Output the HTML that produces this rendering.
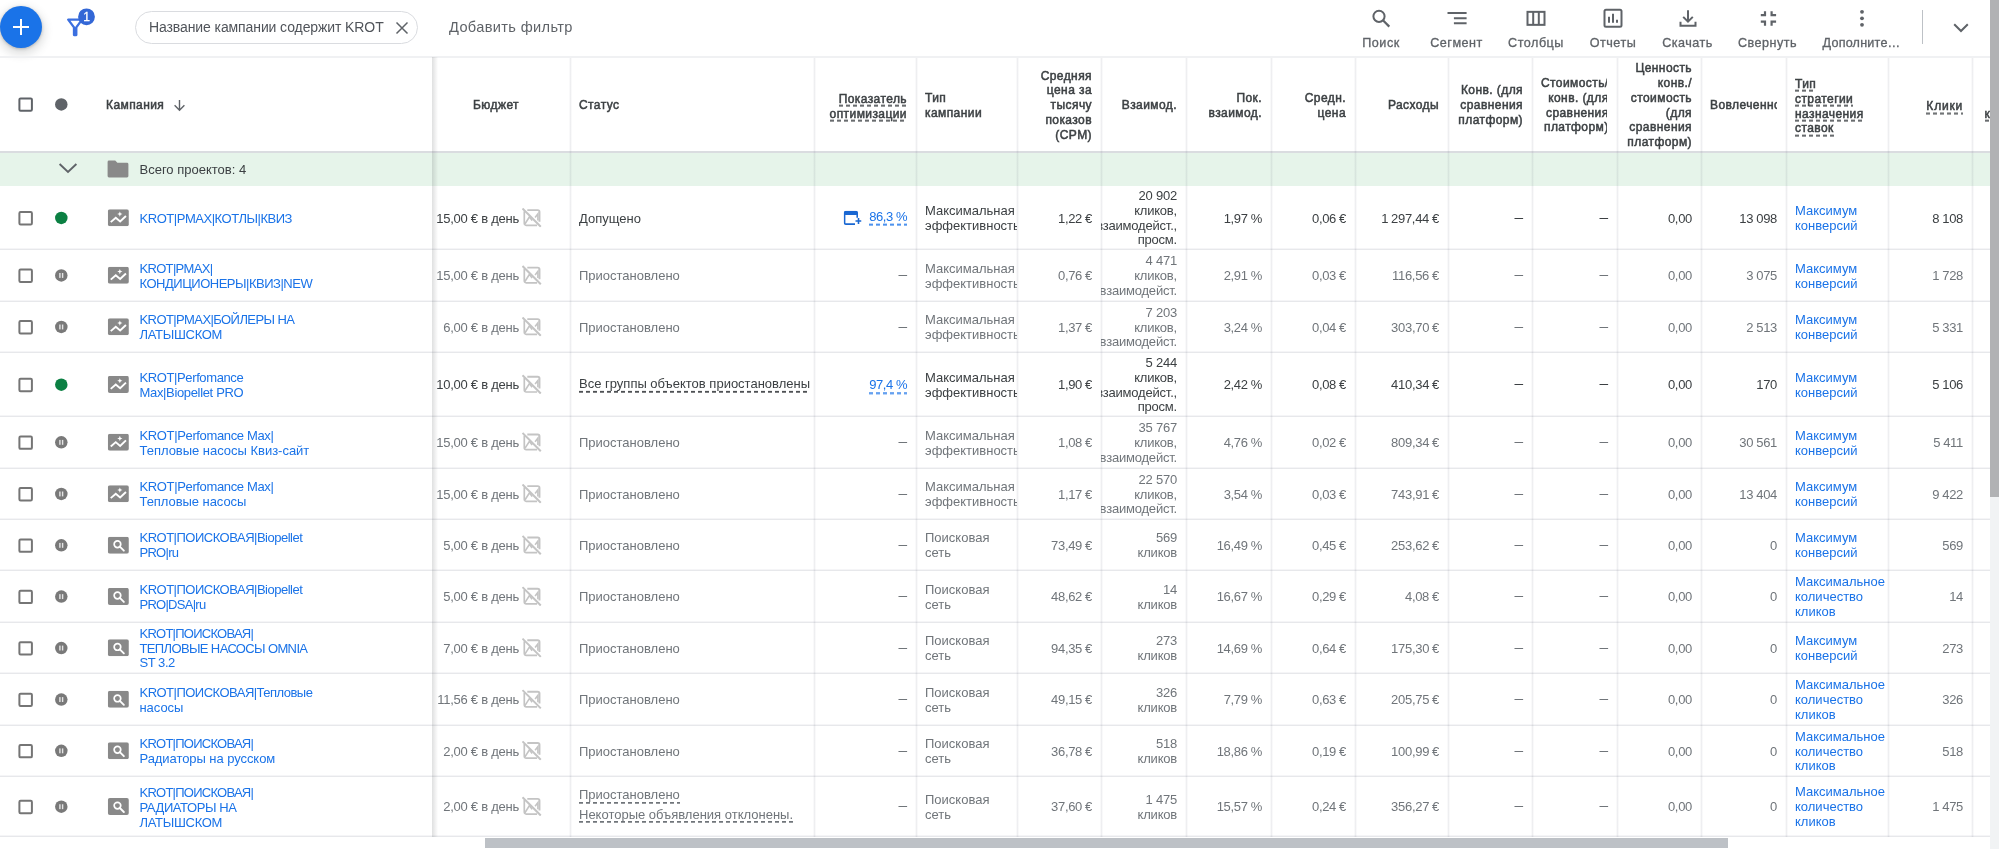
<!DOCTYPE html>
<html lang="ru"><head><meta charset="utf-8"><title>Кампании</title>
<style>
*{box-sizing:border-box}
html,body{margin:0;padding:0}
body{width:1999px;height:849px;overflow:hidden;background:#fff;font-family:"Liberation Sans",sans-serif;font-size:13px;color:#3c4043;position:relative}
.abs{position:absolute}
#toolbar{position:absolute;left:0;top:0;width:1990px;height:57px;background:#fff}
#tbline{position:absolute;left:0;top:56px;width:1990px;height:2px;background:#f0f1f3}
.fab{position:absolute;left:0;top:6px;width:42px;height:42px;border-radius:50%;background:#1a73e8;box-shadow:0 1px 3px rgba(60,64,67,.3),0 4px 8px 3px rgba(60,64,67,.15)}
.fab:before{content:"";position:absolute;left:13px;top:20px;width:16px;height:2px;background:#fff}
.fab:after{content:"";position:absolute;left:20px;top:13px;width:2px;height:16px;background:#fff}
.chip{position:absolute;left:135px;top:11px;width:283px;height:33px;border:1px solid #dadce0;border-radius:17px;background:#fff}
.chip span{position:absolute;left:13px;top:0;line-height:31px;font-size:14px;color:#50545a;white-space:nowrap;letter-spacing:-0.1px}
.addf{position:absolute;left:449px;top:0;line-height:54px;font-size:14.6px;letter-spacing:.35px;color:#5f6368;white-space:nowrap}
.tbtn{position:absolute;top:0;height:57px;width:90px;text-align:center}
.tbtn svg{position:absolute;left:33px;top:6px;transform:translateY(0.35px)}
.tbtn span{position:absolute;left:-20px;right:-20px;top:36.4px;line-height:15px;font-size:12.6px;letter-spacing:.5px;color:#5f6368;-webkit-text-stroke:0.3px #5f6368;white-space:nowrap;text-align:center}
.hline{position:absolute;left:0;width:1990px;height:1px;background:#e7e8eb;box-shadow:0 -1px 0 #f5f5f7}
.vline{position:absolute;top:58px;width:3px;height:779px;margin-left:-1px;background:linear-gradient(to right,rgba(60,64,90,.03) 0,rgba(60,64,90,.03) 1px,rgba(60,64,90,.085) 1px,rgba(60,64,90,.085) 2px,rgba(60,64,90,.03) 2px,rgba(60,64,90,.03) 3px)}
.cell{position:absolute;display:flex;align-items:center;padding:0 9px;overflow:hidden;line-height:14.8px;font-size:13px;white-space:nowrap}
.cell.r{justify-content:flex-end;text-align:right}
.cell.l{justify-content:flex-start;text-align:left}
.cell>span{flex:none;display:block}
.hd{font-weight:normal;-webkit-text-stroke:0.5px #3c4043;font-size:12px;color:#3c4043;line-height:14.8px;letter-spacing:0.42px}
.hd>span,.hd .clip>span{transform:translateY(0.7px)}
.hd.u>span{transform:translateY(1.7px)}
.hd.u1>span{transform:translateY(1.6px);letter-spacing:0.8px}
.clip{overflow:hidden;width:100%;height:100%;display:flex;align-items:center;justify-content:flex-start}
.clip>span{flex:none;display:block;text-align:right}
.p{color:#70757a}
.t{position:relative;top:1px;transform:translateY(0.4px)}
.r1 .t{transform:translateY(0.9px)}
.a{color:#3c4043}
.lk{color:#1a73e8}
.n{letter-spacing:-0.3px;word-spacing:-0.3px}
.ds{font-size:15.5px}
.ds .t{top:-0.8px}
.du{background-image:linear-gradient(to right,currentColor 0,currentColor 4px,transparent 4px,transparent 7px),linear-gradient(to right,color-mix(in srgb,currentColor 75%,transparent) 0,color-mix(in srgb,currentColor 75%,transparent) 4px,transparent 4px,transparent 7px);background-size:7px 1px,7px 1px;background-repeat:repeat-x,repeat-x;background-position:0 calc(100% - 1px),0 100%;padding-bottom:1.5px}
.cb{position:absolute;left:18.3px;width:15px;height:15px;border:2px solid #757575;border-radius:2px;background:#fff}
.dot{position:absolute;left:55.1px;width:12.4px;height:12.4px;border-radius:50%}
.dot.g{background:#0b8043}
.dot.pz{background:#757575}
.dot.pz:before,.dot.pz:after{content:"";position:absolute;top:3.8px;width:1.4px;height:4.8px;background:#fff}
.dot.pz:before{left:4.15px}
.dot.pz:after{left:6.85px}
.ic{position:absolute;left:108px;width:21px;height:17px}
.nm{position:absolute;left:139.5px;display:flex;align-items:center;color:#1a73e8;font-size:13px;line-height:14.8px;white-space:nowrap}
.bic{position:absolute}
</style></head><body>
<div id="app" style="position:absolute;left:0;top:0;width:1999px;height:849px;will-change:transform">
<svg width="0" height="0" style="position:absolute"><defs>
<symbol id="i-pmax" viewBox="0 0 21 17"><rect x="0" y="0" width="21" height="17" rx="2" fill="#898989"/><path d="M2.9 12.9 L7.9 8.5 L12.3 12.3 L18.1 6.7" fill="none" stroke="#fff" stroke-width="1.9" stroke-linejoin="miter"/><path d="M12 2.2 l0.75 1.85 1.85 0.75 -1.85 0.75 -0.75 1.85 -0.75 -1.85 -1.85 -0.75 1.85 -0.75z" fill="#fff"/></symbol>
<symbol id="i-srch" viewBox="0 0 21 17"><rect x="0" y="0" width="21" height="17" rx="2" fill="#898989"/><circle cx="9.6" cy="7.6" r="3.3" fill="none" stroke="#fff" stroke-width="1.7"/><path d="M12 10 L16 14" stroke="#fff" stroke-width="1.9" stroke-linecap="round"/></symbol>
<symbol id="i-bud" viewBox="0 0 20 20"><path d="M5.4 2.5 H15.8 a1.8 1.8 0 0 1 1.8 1.8 V14.2" fill="none" stroke="#c4c4c4" stroke-width="1.9"/><path d="M2.4 3.6 V15.9 a1.8 1.8 0 0 0 1.8 1.8 H15.2" fill="none" stroke="#c4c4c4" stroke-width="1.7"/><path d="M0.6 0.9 L18.9 19.2" stroke="#c4c4c4" stroke-width="2"/><path d="M3 16.4 L7.6 9.2 L10.2 13 M13.2 9.8 L16 6.2 L16 13" fill="none" stroke="#c4c4c4" stroke-width="1.6"/></symbol>
<symbol id="i-opt" viewBox="0 0 18 15"><path d="M11.5 13.4 H2.3 a1.2 1.2 0 0 1 -1.2 -1.2 V2 a1.2 1.2 0 0 1 1.2 -1.2 H12.5 a1.2 1.2 0 0 1 1.2 1.2 V7" fill="none" stroke="#1967d2" stroke-width="1.6"/><rect x="1" y="0.6" width="12.8" height="3.6" rx="1" fill="#1967d2"/><path d="M12 10.3 H18 M15 7.3 V13.3" stroke="#1967d2" stroke-width="1.6"/></symbol>
</defs></svg>
<div id="toolbar"><div class="fab"></div><svg class="abs" style="left:64px;top:6px" width="34" height="34" viewBox="0 0 34 34"><path d="M4.2 13.6 H18 L12.3 21.4 V29 H10 V21.4 Z" fill="none" stroke="#3b6fe0" stroke-width="2.3" stroke-linejoin="round"/><circle cx="22.5" cy="10.8" r="8.4" fill="#3367d6"/><text x="22.5" y="15" font-family="Liberation Sans, sans-serif" font-size="12" fill="#fff" stroke="#fff" stroke-width="0.3" text-anchor="middle">1</text></svg><div class="chip"><span>Название кампании содержит KROT</span><svg class="abs" style="left:259px;top:9px" width="14" height="14" viewBox="0 0 14 14"><path d="M1.5 1.5 L12.5 12.5 M12.5 1.5 L1.5 12.5" stroke="#5f6368" stroke-width="1.5" fill="none"/></svg></div><div class="addf">Добавить фильтр</div><div class="tbtn" style="left:1336px"><svg width="24" height="24" viewBox="0 0 24 24"><circle cx="10" cy="10" r="5.6" fill="none" stroke="#5f6368" stroke-width="2"/><path d="M14.2 14.2 L20.3 20.3" stroke="#5f6368" stroke-width="2.2"/></svg><span>Поиск</span></div><div class="tbtn" style="left:1411.5px"><svg width="24" height="24" viewBox="0 0 24 24"><path d="M2.5 6.6 H21.6 M8.9 11.9 H21.6 M8.9 17 H21.6" stroke="#5f6368" stroke-width="2" fill="none"/></svg><span>Сегмент</span></div><div class="tbtn" style="left:1491px"><svg width="24" height="24" viewBox="0 0 24 24"><rect x="3.5" y="5.5" width="17" height="13" fill="none" stroke="#5f6368" stroke-width="2"/><path d="M9.2 5.5 V18.5 M14.8 5.5 V18.5" stroke="#5f6368" stroke-width="2"/></svg><span>Столбцы</span></div><div class="tbtn" style="left:1568px"><svg width="24" height="24" viewBox="0 0 24 24"><rect x="3.5" y="3.5" width="17" height="17" rx="1.5" fill="none" stroke="#5f6368" stroke-width="2"/><path d="M8 10.5 V16.5 M12 7.5 V16.5 M16 13.5 V16.5" stroke="#5f6368" stroke-width="2"/></svg><span>Отчеты</span></div><div class="tbtn" style="left:1642.5px"><svg width="24" height="24" viewBox="0 0 24 24"><path d="M12 4 V15 M7.2 10.5 L12 15.3 L16.8 10.5" stroke="#5f6368" stroke-width="2" fill="none"/><path d="M4.5 15.5 V19.5 H19.5 V15.5" stroke="#5f6368" stroke-width="2" fill="none"/></svg><span>Скачать</span></div><div class="tbtn" style="left:1722.5px"><svg width="24" height="24" viewBox="0 0 24 24"><path d="M4.8 8.8 H9 V4.8 M15.6 4.8 V8.8 H20.1 M4.8 15.3 H9 V19.4 M20.1 15.3 H15.6 V19.4" stroke="#5f6368" stroke-width="2.2" fill="none"/></svg><span>Свернуть</span></div><div class="tbtn" style="left:1816.5px"><svg width="24" height="24" viewBox="0 0 24 24"><circle cx="12" cy="5.5" r="1.9" fill="#5f6368"/><circle cx="12" cy="12" r="1.9" fill="#5f6368"/><circle cx="12" cy="18.5" r="1.9" fill="#5f6368"/></svg><span style="letter-spacing:0.2px">Дополните…</span></div><div class="abs" style="left:1922px;top:10px;width:1px;height:34px;background:#bdc1c6"></div><svg class="abs" style="left:1949px;top:16px" width="24" height="24" viewBox="0 0 24 24"><path d="M5.2 8.2 L12 15 L18.8 8.2" stroke="#5f6368" stroke-width="2" fill="none"/></svg></div>
<div id="tbline"></div>
<div class="abs" style="left:0;top:153px;width:1990px;height:33px;background:#e6f4ea"></div>
<div class="abs" style="left:0;top:151px;width:1990px;height:2px;background:#dadce0"></div>
<div class="hline" style="top:249px"></div><div class="hline" style="top:301px"></div><div class="hline" style="top:352px"></div><div class="hline" style="top:416px"></div><div class="hline" style="top:468px"></div><div class="hline" style="top:519px"></div><div class="hline" style="top:570px"></div><div class="hline" style="top:622px"></div><div class="hline" style="top:673px"></div><div class="hline" style="top:725px"></div><div class="hline" style="top:776px"></div><div class="hline" style="top:836px"></div>
<div class="vline" style="left:570px"></div><div class="vline" style="left:814px"></div><div class="vline" style="left:916px"></div><div class="vline" style="left:1017px"></div><div class="vline" style="left:1101px"></div><div class="vline" style="left:1186px"></div><div class="vline" style="left:1271px"></div><div class="vline" style="left:1355px"></div><div class="vline" style="left:1448px"></div><div class="vline" style="left:1532px"></div><div class="vline" style="left:1617px"></div><div class="vline" style="left:1701px"></div><div class="vline" style="left:1786px"></div><div class="vline" style="left:1888px"></div><div class="vline" style="left:1972px"></div>
<div class="abs" style="left:432px;top:57px;width:6px;height:780px;background:linear-gradient(to right,rgba(60,64,67,.16),rgba(60,64,67,.10) 40%,rgba(60,64,67,0))"></div>
<div class="cell hd l" style="left:97px;top:58px;width:300px;height:93px"><span>Кампания</span><svg style="margin-left:8.5px;position:relative;top:1px" width="13" height="13" viewBox="0 0 13 13"><path d="M6.5 1 V11 M1.6 6.3 L6.5 11.2 L11.4 6.3" stroke="#5f6368" stroke-width="1.4" fill="none"/></svg></div><div class="cell hd r " style="left:433px;top:58px;width:137px;height:93px;padding-right:51px;"><span>Бюджет</span></div><div class="cell hd l " style="left:570px;top:58px;width:244px;height:93px;"><span>Статус</span></div><div class="cell hd r u" style="left:814px;top:58px;width:102px;height:93px;"><span><span class="du">Показатель</span><br><span class="du">оптимизации</span></span></div><div class="cell hd l " style="left:916px;top:58px;width:101px;height:93px;"><span>Тип<br>кампании</span></div><div class="cell hd r " style="left:1017px;top:58px;width:84px;height:93px;"><span>Средняя<br>цена за<br>тысячу<br>показов<br>(CPM)</span></div><div class="cell hd r " style="left:1101px;top:58px;width:85px;height:93px;"><span>Взаимод.</span></div><div class="cell hd r " style="left:1186px;top:58px;width:85px;height:93px;"><span>Пок.<br>взаимод.</span></div><div class="cell hd r " style="left:1271px;top:58px;width:84px;height:93px;"><span>Средн.<br>цена</span></div><div class="cell hd r " style="left:1355px;top:58px;width:93px;height:93px;"><span>Расходы</span></div><div class="cell hd r " style="left:1448px;top:58px;width:84px;height:93px;"><span>Конв. (для<br>сравнения<br>платформ)</span></div><div class="cell hd l" style="left:1532px;top:58px;width:85px;height:93px;padding-right:10px"><div class="clip"><span>Стоимость/<br>конв. (для<br>сравнения<br>платформ)</span></div></div><div class="cell hd r " style="left:1617px;top:58px;width:84px;height:93px;"><span>Ценность<br>конв./<br>стоимость<br>(для<br>сравнения<br>платформ)</span></div><div class="cell hd l" style="left:1701px;top:58px;width:85px;height:93px;padding-right:9px"><div class="clip"><span>Вовлеченность</span></div></div><div class="cell hd l u" style="left:1786px;top:58px;width:102px;height:93px;"><span><span class="du">Тип</span><br><span class="du">стратегии</span><br><span class="du">назначения</span><br><span class="du">ставок</span></span></div><div class="cell hd r u1" style="left:1888px;top:58px;width:84px;height:93px;"><span><span class="du">Клики</span></span></div><div class="cell hd l u" style="left:1972px;top:58px;width:60px;height:93px;padding-left:12.6px"><span style="text-align:right"><span class="du">Все</span><br><span class="du">конв.</span></span></div>
<svg class="abs" style="left:58px;top:162px" width="20" height="12" viewBox="0 0 20 12"><path d="M1.6 2 L10 9.9 L18.4 2" stroke="#5f6368" stroke-width="1.9" fill="none"/></svg><svg class="abs" style="left:107px;top:160px" width="22" height="18" viewBox="0 0 22 18"><path d="M2 0.6 H8.2 L10.4 2.8 H20 a1.4 1.4 0 0 1 1.4 1.4 V16 a1.4 1.4 0 0 1 -1.4 1.4 H2 A1.4 1.4 0 0 1 0.6 16 V2 A1.4 1.4 0 0 1 2 0.6Z" fill="#898989"/></svg><div class="cell l" style="left:130.5px;top:153px;width:290px;height:33px;color:#3c4043;font-size:13px"><span class="t">Всего проектов: 4</span></div>
<div class="nm r1" style="top:186px;height:63px"><span class="t"><span style="letter-spacing:-0.463px">KROT|PMAX|КОТЛЫ|КВИЗ</span></span></div><div class="cell r a r1" style="left:433px;top:186px;width:137px;height:63px;padding-right:51px;padding-left:0"><span class="t" style="letter-spacing:-0.25px">15,00 € в день</span></div><div class="cell l a r1" style="left:570px;top:186px;width:244px;height:63px;"><span class="t">Допущено</span></div><div class="cell r lk r1" style="left:814px;top:186px;width:102px;height:63px;transform:translateY(-2.2px);"><span class="t"><span class="du" style="letter-spacing:-0.45px">86,3 %</span></span></div><div class="cell l a" style="left:916px;top:186px;width:101px;height:63px;"><span class="t">Максимальная<br>эффективность</span></div><div class="cell r a n r1" style="left:1017px;top:186px;width:84px;height:63px;"><span class="t">1,22 €</span></div><div class="cell r a" style="left:1101px;top:186px;width:85px;height:63px;letter-spacing:-0.2px;"><span class="t">20 902<br>кликов,<br>взаимодейст.,<br>просм.</span></div><div class="cell r a n r1" style="left:1186px;top:186px;width:85px;height:63px;"><span class="t">1,97 %</span></div><div class="cell r a n r1" style="left:1271px;top:186px;width:84px;height:63px;"><span class="t">0,06 €</span></div><div class="cell r a n r1" style="left:1355px;top:186px;width:93px;height:63px;"><span class="t">1 297,44 €</span></div><div class="cell r a ds r1" style="left:1448px;top:186px;width:84px;height:63px;"><span class="t">–</span></div><div class="cell r a ds r1" style="left:1532px;top:186px;width:85px;height:63px;"><span class="t">–</span></div><div class="cell r a n r1" style="left:1617px;top:186px;width:84px;height:63px;"><span class="t">0,00</span></div><div class="cell r a n r1" style="left:1701px;top:186px;width:85px;height:63px;"><span class="t">13 098</span></div><div class="cell l lk" style="left:1786px;top:186px;width:102px;height:63px;"><span class="t">Максимум<br>конверсий</span></div><div class="cell r a n r1" style="left:1888px;top:186px;width:84px;height:63px;"><span class="t">8 108</span></div>
<div class="nm " style="top:250px;height:51px"><span class="t"><span style="letter-spacing:-0.682px">KROT|PMAX|</span><br><span style="letter-spacing:-0.487px">КОНДИЦИОНЕРЫ|КВИЗ|NEW</span></span></div><div class="cell r p " style="left:433px;top:250px;width:137px;height:51px;padding-right:51px;padding-left:0"><span class="t" style="letter-spacing:-0.25px">15,00 € в день</span></div><div class="cell l p " style="left:570px;top:250px;width:244px;height:51px;"><span class="t">Приостановлено</span></div><div class="cell r p ds " style="left:814px;top:250px;width:102px;height:51px;"><span class="t">–</span></div><div class="cell l p" style="left:916px;top:250px;width:101px;height:51px;"><span class="t">Максимальная<br>эффективность</span></div><div class="cell r p n " style="left:1017px;top:250px;width:84px;height:51px;"><span class="t">0,76 €</span></div><div class="cell r p" style="left:1101px;top:250px;width:85px;height:51px;letter-spacing:-0.2px;"><span class="t">4 471<br>кликов,<br>взаимодейст.</span></div><div class="cell r p n " style="left:1186px;top:250px;width:85px;height:51px;"><span class="t">2,91 %</span></div><div class="cell r p n " style="left:1271px;top:250px;width:84px;height:51px;"><span class="t">0,03 €</span></div><div class="cell r p n " style="left:1355px;top:250px;width:93px;height:51px;"><span class="t">116,56 €</span></div><div class="cell r p ds " style="left:1448px;top:250px;width:84px;height:51px;"><span class="t">–</span></div><div class="cell r p ds " style="left:1532px;top:250px;width:85px;height:51px;"><span class="t">–</span></div><div class="cell r p n " style="left:1617px;top:250px;width:84px;height:51px;"><span class="t">0,00</span></div><div class="cell r p n " style="left:1701px;top:250px;width:85px;height:51px;"><span class="t">3 075</span></div><div class="cell l lk" style="left:1786px;top:250px;width:102px;height:51px;"><span class="t">Максимум<br>конверсий</span></div><div class="cell r p n " style="left:1888px;top:250px;width:84px;height:51px;"><span class="t">1 728</span></div>
<div class="nm " style="top:302px;height:50px"><span class="t"><span style="letter-spacing:-0.590px">KROT|PMAX|БОЙЛЕРЫ НА</span><br><span style="letter-spacing:-0.301px">ЛАТЫШСКОМ</span></span></div><div class="cell r p " style="left:433px;top:302px;width:137px;height:50px;padding-right:51px;padding-left:0"><span class="t" style="letter-spacing:-0.25px">6,00 € в день</span></div><div class="cell l p " style="left:570px;top:302px;width:244px;height:50px;"><span class="t">Приостановлено</span></div><div class="cell r p ds " style="left:814px;top:302px;width:102px;height:50px;"><span class="t">–</span></div><div class="cell l p" style="left:916px;top:302px;width:101px;height:50px;"><span class="t">Максимальная<br>эффективность</span></div><div class="cell r p n " style="left:1017px;top:302px;width:84px;height:50px;"><span class="t">1,37 €</span></div><div class="cell r p" style="left:1101px;top:302px;width:85px;height:50px;letter-spacing:-0.2px;"><span class="t">7 203<br>кликов,<br>взаимодейст.</span></div><div class="cell r p n " style="left:1186px;top:302px;width:85px;height:50px;"><span class="t">3,24 %</span></div><div class="cell r p n " style="left:1271px;top:302px;width:84px;height:50px;"><span class="t">0,04 €</span></div><div class="cell r p n " style="left:1355px;top:302px;width:93px;height:50px;"><span class="t">303,70 €</span></div><div class="cell r p ds " style="left:1448px;top:302px;width:84px;height:50px;"><span class="t">–</span></div><div class="cell r p ds " style="left:1532px;top:302px;width:85px;height:50px;"><span class="t">–</span></div><div class="cell r p n " style="left:1617px;top:302px;width:84px;height:50px;"><span class="t">0,00</span></div><div class="cell r p n " style="left:1701px;top:302px;width:85px;height:50px;"><span class="t">2 513</span></div><div class="cell l lk" style="left:1786px;top:302px;width:102px;height:50px;"><span class="t">Максимум<br>конверсий</span></div><div class="cell r p n " style="left:1888px;top:302px;width:84px;height:50px;"><span class="t">5 331</span></div>
<div class="nm " style="top:353px;height:63px"><span class="t"><span style="letter-spacing:-0.386px">KROT|Perfomance</span><br><span style="letter-spacing:-0.341px">Max|Biopellet PRO</span></span></div><div class="cell r a " style="left:433px;top:353px;width:137px;height:63px;padding-right:51px;padding-left:0"><span class="t" style="letter-spacing:-0.25px">10,00 € в день</span></div><div class="cell l a " style="left:570px;top:351px;width:244px;height:63px;transform:translateY(0.5px);"><span class="t"><span class="du">Все группы объектов приостановлены</span></span></div><div class="cell r lk " style="left:814px;top:353px;width:102px;height:63px;transform:translateY(0.0px);"><span class="t"><span class="du" style="letter-spacing:-0.45px">97,4 %</span></span></div><div class="cell l a" style="left:916px;top:353px;width:101px;height:63px;"><span class="t">Максимальная<br>эффективность</span></div><div class="cell r a n " style="left:1017px;top:353px;width:84px;height:63px;"><span class="t">1,90 €</span></div><div class="cell r a" style="left:1101px;top:353px;width:85px;height:63px;letter-spacing:-0.2px;"><span class="t">5 244<br>кликов,<br>взаимодейст.,<br>просм.</span></div><div class="cell r a n " style="left:1186px;top:353px;width:85px;height:63px;"><span class="t">2,42 %</span></div><div class="cell r a n " style="left:1271px;top:353px;width:84px;height:63px;"><span class="t">0,08 €</span></div><div class="cell r a n " style="left:1355px;top:353px;width:93px;height:63px;"><span class="t">410,34 €</span></div><div class="cell r a ds " style="left:1448px;top:353px;width:84px;height:63px;"><span class="t">–</span></div><div class="cell r a ds " style="left:1532px;top:353px;width:85px;height:63px;"><span class="t">–</span></div><div class="cell r a n " style="left:1617px;top:353px;width:84px;height:63px;"><span class="t">0,00</span></div><div class="cell r a n " style="left:1701px;top:353px;width:85px;height:63px;"><span class="t">170</span></div><div class="cell l lk" style="left:1786px;top:353px;width:102px;height:63px;"><span class="t">Максимум<br>конверсий</span></div><div class="cell r a n " style="left:1888px;top:353px;width:84px;height:63px;"><span class="t">5 106</span></div>
<div class="nm " style="top:417px;height:51px"><span class="t"><span style="letter-spacing:-0.357px">KROT|Perfomance Max|</span><br><span style="letter-spacing:-0.019px">Тепловые насосы Квиз-сайт</span></span></div><div class="cell r p " style="left:433px;top:417px;width:137px;height:51px;padding-right:51px;padding-left:0"><span class="t" style="letter-spacing:-0.25px">15,00 € в день</span></div><div class="cell l p " style="left:570px;top:417px;width:244px;height:51px;"><span class="t">Приостановлено</span></div><div class="cell r p ds " style="left:814px;top:417px;width:102px;height:51px;"><span class="t">–</span></div><div class="cell l p" style="left:916px;top:417px;width:101px;height:51px;"><span class="t">Максимальная<br>эффективность</span></div><div class="cell r p n " style="left:1017px;top:417px;width:84px;height:51px;"><span class="t">1,08 €</span></div><div class="cell r p" style="left:1101px;top:417px;width:85px;height:51px;letter-spacing:-0.2px;"><span class="t">35 767<br>кликов,<br>взаимодейст.</span></div><div class="cell r p n " style="left:1186px;top:417px;width:85px;height:51px;"><span class="t">4,76 %</span></div><div class="cell r p n " style="left:1271px;top:417px;width:84px;height:51px;"><span class="t">0,02 €</span></div><div class="cell r p n " style="left:1355px;top:417px;width:93px;height:51px;"><span class="t">809,34 €</span></div><div class="cell r p ds " style="left:1448px;top:417px;width:84px;height:51px;"><span class="t">–</span></div><div class="cell r p ds " style="left:1532px;top:417px;width:85px;height:51px;"><span class="t">–</span></div><div class="cell r p n " style="left:1617px;top:417px;width:84px;height:51px;"><span class="t">0,00</span></div><div class="cell r p n " style="left:1701px;top:417px;width:85px;height:51px;"><span class="t">30 561</span></div><div class="cell l lk" style="left:1786px;top:417px;width:102px;height:51px;"><span class="t">Максимум<br>конверсий</span></div><div class="cell r p n " style="left:1888px;top:417px;width:84px;height:51px;"><span class="t">5 411</span></div>
<div class="nm " style="top:469px;height:50px"><span class="t"><span style="letter-spacing:-0.357px">KROT|Perfomance Max|</span><br><span style="letter-spacing:-0.058px">Тепловые насосы</span></span></div><div class="cell r p " style="left:433px;top:469px;width:137px;height:50px;padding-right:51px;padding-left:0"><span class="t" style="letter-spacing:-0.25px">15,00 € в день</span></div><div class="cell l p " style="left:570px;top:469px;width:244px;height:50px;"><span class="t">Приостановлено</span></div><div class="cell r p ds " style="left:814px;top:469px;width:102px;height:50px;"><span class="t">–</span></div><div class="cell l p" style="left:916px;top:469px;width:101px;height:50px;"><span class="t">Максимальная<br>эффективность</span></div><div class="cell r p n " style="left:1017px;top:469px;width:84px;height:50px;"><span class="t">1,17 €</span></div><div class="cell r p" style="left:1101px;top:469px;width:85px;height:50px;letter-spacing:-0.2px;"><span class="t">22 570<br>кликов,<br>взаимодейст.</span></div><div class="cell r p n " style="left:1186px;top:469px;width:85px;height:50px;"><span class="t">3,54 %</span></div><div class="cell r p n " style="left:1271px;top:469px;width:84px;height:50px;"><span class="t">0,03 €</span></div><div class="cell r p n " style="left:1355px;top:469px;width:93px;height:50px;"><span class="t">743,91 €</span></div><div class="cell r p ds " style="left:1448px;top:469px;width:84px;height:50px;"><span class="t">–</span></div><div class="cell r p ds " style="left:1532px;top:469px;width:85px;height:50px;"><span class="t">–</span></div><div class="cell r p n " style="left:1617px;top:469px;width:84px;height:50px;"><span class="t">0,00</span></div><div class="cell r p n " style="left:1701px;top:469px;width:85px;height:50px;"><span class="t">13 404</span></div><div class="cell l lk" style="left:1786px;top:469px;width:102px;height:50px;"><span class="t">Максимум<br>конверсий</span></div><div class="cell r p n " style="left:1888px;top:469px;width:84px;height:50px;"><span class="t">9 422</span></div>
<div class="nm " style="top:520px;height:50px"><span class="t"><span style="letter-spacing:-0.499px">KROT|ПОИСКОВАЯ|Biopellet</span><br><span style="letter-spacing:-0.718px">PRO|ru</span></span></div><div class="cell r p " style="left:433px;top:520px;width:137px;height:50px;padding-right:51px;padding-left:0"><span class="t" style="letter-spacing:-0.25px">5,00 € в день</span></div><div class="cell l p " style="left:570px;top:520px;width:244px;height:50px;"><span class="t">Приостановлено</span></div><div class="cell r p ds " style="left:814px;top:520px;width:102px;height:50px;"><span class="t">–</span></div><div class="cell l p" style="left:916px;top:520px;width:101px;height:50px;"><span class="t">Поисковая<br>сеть</span></div><div class="cell r p n " style="left:1017px;top:520px;width:84px;height:50px;"><span class="t">73,49 €</span></div><div class="cell r p" style="left:1101px;top:520px;width:85px;height:50px;letter-spacing:-0.2px;"><span class="t">569<br>кликов</span></div><div class="cell r p n " style="left:1186px;top:520px;width:85px;height:50px;"><span class="t">16,49 %</span></div><div class="cell r p n " style="left:1271px;top:520px;width:84px;height:50px;"><span class="t">0,45 €</span></div><div class="cell r p n " style="left:1355px;top:520px;width:93px;height:50px;"><span class="t">253,62 €</span></div><div class="cell r p ds " style="left:1448px;top:520px;width:84px;height:50px;"><span class="t">–</span></div><div class="cell r p ds " style="left:1532px;top:520px;width:85px;height:50px;"><span class="t">–</span></div><div class="cell r p n " style="left:1617px;top:520px;width:84px;height:50px;"><span class="t">0,00</span></div><div class="cell r p n " style="left:1701px;top:520px;width:85px;height:50px;"><span class="t">0</span></div><div class="cell l lk" style="left:1786px;top:520px;width:102px;height:50px;"><span class="t">Максимум<br>конверсий</span></div><div class="cell r p n " style="left:1888px;top:520px;width:84px;height:50px;"><span class="t">569</span></div>
<div class="nm " style="top:571px;height:51px"><span class="t"><span style="letter-spacing:-0.499px">KROT|ПОИСКОВАЯ|Biopellet</span><br><span style="letter-spacing:-0.732px">PRO|DSA|ru</span></span></div><div class="cell r p " style="left:433px;top:571px;width:137px;height:51px;padding-right:51px;padding-left:0"><span class="t" style="letter-spacing:-0.25px">5,00 € в день</span></div><div class="cell l p " style="left:570px;top:571px;width:244px;height:51px;"><span class="t">Приостановлено</span></div><div class="cell r p ds " style="left:814px;top:571px;width:102px;height:51px;"><span class="t">–</span></div><div class="cell l p" style="left:916px;top:571px;width:101px;height:51px;"><span class="t">Поисковая<br>сеть</span></div><div class="cell r p n " style="left:1017px;top:571px;width:84px;height:51px;"><span class="t">48,62 €</span></div><div class="cell r p" style="left:1101px;top:571px;width:85px;height:51px;letter-spacing:-0.2px;"><span class="t">14<br>кликов</span></div><div class="cell r p n " style="left:1186px;top:571px;width:85px;height:51px;"><span class="t">16,67 %</span></div><div class="cell r p n " style="left:1271px;top:571px;width:84px;height:51px;"><span class="t">0,29 €</span></div><div class="cell r p n " style="left:1355px;top:571px;width:93px;height:51px;"><span class="t">4,08 €</span></div><div class="cell r p ds " style="left:1448px;top:571px;width:84px;height:51px;"><span class="t">–</span></div><div class="cell r p ds " style="left:1532px;top:571px;width:85px;height:51px;"><span class="t">–</span></div><div class="cell r p n " style="left:1617px;top:571px;width:84px;height:51px;"><span class="t">0,00</span></div><div class="cell r p n " style="left:1701px;top:571px;width:85px;height:51px;"><span class="t">0</span></div><div class="cell l lk" style="left:1786px;top:571px;width:102px;height:51px;"><span class="t">Максимальное<br>количество<br>кликов</span></div><div class="cell r p n " style="left:1888px;top:571px;width:84px;height:51px;"><span class="t">14</span></div>
<div class="nm " style="top:623px;height:50px"><span class="t"><span style="letter-spacing:-0.753px">KROT|ПОИСКОВАЯ|</span><br><span style="letter-spacing:-0.632px">ТЕПЛОВЫЕ НАСОСЫ OMNIA</span><br><span style="letter-spacing:-0.460px">ST 3.2</span></span></div><div class="cell r p " style="left:433px;top:623px;width:137px;height:50px;padding-right:51px;padding-left:0"><span class="t" style="letter-spacing:-0.25px">7,00 € в день</span></div><div class="cell l p " style="left:570px;top:623px;width:244px;height:50px;"><span class="t">Приостановлено</span></div><div class="cell r p ds " style="left:814px;top:623px;width:102px;height:50px;"><span class="t">–</span></div><div class="cell l p" style="left:916px;top:623px;width:101px;height:50px;"><span class="t">Поисковая<br>сеть</span></div><div class="cell r p n " style="left:1017px;top:623px;width:84px;height:50px;"><span class="t">94,35 €</span></div><div class="cell r p" style="left:1101px;top:623px;width:85px;height:50px;letter-spacing:-0.2px;"><span class="t">273<br>кликов</span></div><div class="cell r p n " style="left:1186px;top:623px;width:85px;height:50px;"><span class="t">14,69 %</span></div><div class="cell r p n " style="left:1271px;top:623px;width:84px;height:50px;"><span class="t">0,64 €</span></div><div class="cell r p n " style="left:1355px;top:623px;width:93px;height:50px;"><span class="t">175,30 €</span></div><div class="cell r p ds " style="left:1448px;top:623px;width:84px;height:50px;"><span class="t">–</span></div><div class="cell r p ds " style="left:1532px;top:623px;width:85px;height:50px;"><span class="t">–</span></div><div class="cell r p n " style="left:1617px;top:623px;width:84px;height:50px;"><span class="t">0,00</span></div><div class="cell r p n " style="left:1701px;top:623px;width:85px;height:50px;"><span class="t">0</span></div><div class="cell l lk" style="left:1786px;top:623px;width:102px;height:50px;"><span class="t">Максимум<br>конверсий</span></div><div class="cell r p n " style="left:1888px;top:623px;width:84px;height:50px;"><span class="t">273</span></div>
<div class="nm " style="top:674px;height:51px"><span class="t"><span style="letter-spacing:-0.518px">KROT|ПОИСКОВАЯ|Тепловые</span><br><span style="letter-spacing:-0.057px">насосы</span></span></div><div class="cell r p " style="left:433px;top:674px;width:137px;height:51px;padding-right:51px;padding-left:0"><span class="t" style="letter-spacing:-0.25px">11,56 € в день</span></div><div class="cell l p " style="left:570px;top:674px;width:244px;height:51px;"><span class="t">Приостановлено</span></div><div class="cell r p ds " style="left:814px;top:674px;width:102px;height:51px;"><span class="t">–</span></div><div class="cell l p" style="left:916px;top:674px;width:101px;height:51px;"><span class="t">Поисковая<br>сеть</span></div><div class="cell r p n " style="left:1017px;top:674px;width:84px;height:51px;"><span class="t">49,15 €</span></div><div class="cell r p" style="left:1101px;top:674px;width:85px;height:51px;letter-spacing:-0.2px;"><span class="t">326<br>кликов</span></div><div class="cell r p n " style="left:1186px;top:674px;width:85px;height:51px;"><span class="t">7,79 %</span></div><div class="cell r p n " style="left:1271px;top:674px;width:84px;height:51px;"><span class="t">0,63 €</span></div><div class="cell r p n " style="left:1355px;top:674px;width:93px;height:51px;"><span class="t">205,75 €</span></div><div class="cell r p ds " style="left:1448px;top:674px;width:84px;height:51px;"><span class="t">–</span></div><div class="cell r p ds " style="left:1532px;top:674px;width:85px;height:51px;"><span class="t">–</span></div><div class="cell r p n " style="left:1617px;top:674px;width:84px;height:51px;"><span class="t">0,00</span></div><div class="cell r p n " style="left:1701px;top:674px;width:85px;height:51px;"><span class="t">0</span></div><div class="cell l lk" style="left:1786px;top:674px;width:102px;height:51px;"><span class="t">Максимальное<br>количество<br>кликов</span></div><div class="cell r p n " style="left:1888px;top:674px;width:84px;height:51px;"><span class="t">326</span></div>
<div class="nm " style="top:726px;height:50px"><span class="t"><span style="letter-spacing:-0.753px">KROT|ПОИСКОВАЯ|</span><br><span style="letter-spacing:-0.063px">Радиаторы на русском</span></span></div><div class="cell r p " style="left:433px;top:726px;width:137px;height:50px;padding-right:51px;padding-left:0"><span class="t" style="letter-spacing:-0.25px">2,00 € в день</span></div><div class="cell l p " style="left:570px;top:726px;width:244px;height:50px;"><span class="t">Приостановлено</span></div><div class="cell r p ds " style="left:814px;top:726px;width:102px;height:50px;"><span class="t">–</span></div><div class="cell l p" style="left:916px;top:726px;width:101px;height:50px;"><span class="t">Поисковая<br>сеть</span></div><div class="cell r p n " style="left:1017px;top:726px;width:84px;height:50px;"><span class="t">36,78 €</span></div><div class="cell r p" style="left:1101px;top:726px;width:85px;height:50px;letter-spacing:-0.2px;"><span class="t">518<br>кликов</span></div><div class="cell r p n " style="left:1186px;top:726px;width:85px;height:50px;"><span class="t">18,86 %</span></div><div class="cell r p n " style="left:1271px;top:726px;width:84px;height:50px;"><span class="t">0,19 €</span></div><div class="cell r p n " style="left:1355px;top:726px;width:93px;height:50px;"><span class="t">100,99 €</span></div><div class="cell r p ds " style="left:1448px;top:726px;width:84px;height:50px;"><span class="t">–</span></div><div class="cell r p ds " style="left:1532px;top:726px;width:85px;height:50px;"><span class="t">–</span></div><div class="cell r p n " style="left:1617px;top:726px;width:84px;height:50px;"><span class="t">0,00</span></div><div class="cell r p n " style="left:1701px;top:726px;width:85px;height:50px;"><span class="t">0</span></div><div class="cell l lk" style="left:1786px;top:726px;width:102px;height:50px;"><span class="t">Максимальное<br>количество<br>кликов</span></div><div class="cell r p n " style="left:1888px;top:726px;width:84px;height:50px;"><span class="t">518</span></div>
<div class="nm " style="top:777px;height:59px;transform:translateY(0.8px)"><span class="t"><span style="letter-spacing:-0.753px">KROT|ПОИСКОВАЯ|</span><br><span style="letter-spacing:-0.428px">РАДИАТОРЫ НА</span><br><span style="letter-spacing:-0.301px">ЛАТЫШСКОМ</span></span></div><div class="cell r p " style="left:433px;top:777px;width:137px;height:59px;padding-right:51px;padding-left:0"><span class="t" style="letter-spacing:-0.25px">2,00 € в день</span></div><div class="cell l p" style="left:570px;top:775px;width:244px;height:59px;line-height:19.4px;transform:translateY(-1.4px);"><span class="t"><span class="du">Приостановлено</span><br><span class="du">Некоторые объявления отклонены.</span></span></div><div class="cell r p ds " style="left:814px;top:777px;width:102px;height:59px;"><span class="t">–</span></div><div class="cell l p" style="left:916px;top:777px;width:101px;height:59px;"><span class="t">Поисковая<br>сеть</span></div><div class="cell r p n " style="left:1017px;top:777px;width:84px;height:59px;"><span class="t">37,60 €</span></div><div class="cell r p" style="left:1101px;top:777px;width:85px;height:59px;letter-spacing:-0.2px;"><span class="t">1 475<br>кликов</span></div><div class="cell r p n " style="left:1186px;top:777px;width:85px;height:59px;"><span class="t">15,57 %</span></div><div class="cell r p n " style="left:1271px;top:777px;width:84px;height:59px;"><span class="t">0,24 €</span></div><div class="cell r p n " style="left:1355px;top:777px;width:93px;height:59px;"><span class="t">356,27 €</span></div><div class="cell r p ds " style="left:1448px;top:777px;width:84px;height:59px;"><span class="t">–</span></div><div class="cell r p ds " style="left:1532px;top:777px;width:85px;height:59px;"><span class="t">–</span></div><div class="cell r p n " style="left:1617px;top:777px;width:84px;height:59px;"><span class="t">0,00</span></div><div class="cell r p n " style="left:1701px;top:777px;width:85px;height:59px;"><span class="t">0</span></div><div class="cell l lk" style="left:1786px;top:777px;width:102px;height:59px;"><span class="t">Максимальное<br>количество<br>кликов</span></div><div class="cell r p n " style="left:1888px;top:777px;width:84px;height:59px;"><span class="t">1 475</span></div>
<svg class="abs" style="left:0;top:0;pointer-events:none" width="1999" height="849" viewBox="0 0 1999 849"><rect x="19.4" y="98.4" width="12.5" height="12.4" rx="1.2" fill="#fff" stroke="#5f6368" stroke-width="2"/><circle cx="61.3" cy="104.4" r="6.25" fill="#5f6368"/><rect x="19.4" y="212.05" width="12.5" height="12.4" rx="1.2" fill="#fff" stroke="#757575" stroke-width="2"/><circle cx="61.3" cy="217.95" r="6.25" fill="#0b8043"/><use href="#i-pmax" x="107.8" y="209.25" width="21.1" height="17"/><use href="#i-bud" x="521.9" y="207.60" width="20" height="20"/><use href="#i-opt" x="843.5" y="210.75" width="18" height="15"/><rect x="19.4" y="269.55" width="12.5" height="12.4" rx="1.2" fill="#fff" stroke="#757575" stroke-width="2"/><circle cx="61.3" cy="275.45" r="6.25" fill="#797979"/><rect x="59.2" y="273.00" width="1.4" height="4.9" fill="#e4e4e4"/><rect x="61.9" y="273.00" width="1.4" height="4.9" fill="#e4e4e4"/><use href="#i-pmax" x="107.8" y="266.75" width="21.1" height="17"/><use href="#i-bud" x="521.9" y="265.10" width="20" height="20"/><rect x="19.4" y="321.05" width="12.5" height="12.4" rx="1.2" fill="#fff" stroke="#757575" stroke-width="2"/><circle cx="61.3" cy="326.95" r="6.25" fill="#797979"/><rect x="59.2" y="324.50" width="1.4" height="4.9" fill="#e4e4e4"/><rect x="61.9" y="324.50" width="1.4" height="4.9" fill="#e4e4e4"/><use href="#i-pmax" x="107.8" y="318.25" width="21.1" height="17"/><use href="#i-bud" x="521.9" y="316.60" width="20" height="20"/><rect x="19.4" y="378.75" width="12.5" height="12.4" rx="1.2" fill="#fff" stroke="#757575" stroke-width="2"/><circle cx="61.3" cy="384.65" r="6.25" fill="#0b8043"/><use href="#i-pmax" x="107.8" y="375.95" width="21.1" height="17"/><use href="#i-bud" x="521.9" y="374.30" width="20" height="20"/><rect x="19.4" y="436.45" width="12.5" height="12.4" rx="1.2" fill="#fff" stroke="#757575" stroke-width="2"/><circle cx="61.3" cy="442.35" r="6.25" fill="#797979"/><rect x="59.2" y="439.90" width="1.4" height="4.9" fill="#e4e4e4"/><rect x="61.9" y="439.90" width="1.4" height="4.9" fill="#e4e4e4"/><use href="#i-pmax" x="107.8" y="433.65" width="21.1" height="17"/><use href="#i-bud" x="521.9" y="432.00" width="20" height="20"/><rect x="19.4" y="488.05" width="12.5" height="12.4" rx="1.2" fill="#fff" stroke="#757575" stroke-width="2"/><circle cx="61.3" cy="493.95" r="6.25" fill="#797979"/><rect x="59.2" y="491.50" width="1.4" height="4.9" fill="#e4e4e4"/><rect x="61.9" y="491.50" width="1.4" height="4.9" fill="#e4e4e4"/><use href="#i-pmax" x="107.8" y="485.25" width="21.1" height="17"/><use href="#i-bud" x="521.9" y="483.60" width="20" height="20"/><rect x="19.4" y="539.45" width="12.5" height="12.4" rx="1.2" fill="#fff" stroke="#757575" stroke-width="2"/><circle cx="61.3" cy="545.35" r="6.25" fill="#797979"/><rect x="59.2" y="542.90" width="1.4" height="4.9" fill="#e4e4e4"/><rect x="61.9" y="542.90" width="1.4" height="4.9" fill="#e4e4e4"/><use href="#i-srch" x="107.8" y="536.65" width="21.1" height="17"/><use href="#i-bud" x="521.9" y="535.00" width="20" height="20"/><rect x="19.4" y="590.70" width="12.5" height="12.4" rx="1.2" fill="#fff" stroke="#757575" stroke-width="2"/><circle cx="61.3" cy="596.60" r="6.25" fill="#797979"/><rect x="59.2" y="594.15" width="1.4" height="4.9" fill="#e4e4e4"/><rect x="61.9" y="594.15" width="1.4" height="4.9" fill="#e4e4e4"/><use href="#i-srch" x="107.8" y="587.90" width="21.1" height="17"/><use href="#i-bud" x="521.9" y="586.25" width="20" height="20"/><rect x="19.4" y="642.15" width="12.5" height="12.4" rx="1.2" fill="#fff" stroke="#757575" stroke-width="2"/><circle cx="61.3" cy="648.05" r="6.25" fill="#797979"/><rect x="59.2" y="645.60" width="1.4" height="4.9" fill="#e4e4e4"/><rect x="61.9" y="645.60" width="1.4" height="4.9" fill="#e4e4e4"/><use href="#i-srch" x="107.8" y="639.35" width="21.1" height="17"/><use href="#i-bud" x="521.9" y="637.70" width="20" height="20"/><rect x="19.4" y="693.65" width="12.5" height="12.4" rx="1.2" fill="#fff" stroke="#757575" stroke-width="2"/><circle cx="61.3" cy="699.55" r="6.25" fill="#797979"/><rect x="59.2" y="697.10" width="1.4" height="4.9" fill="#e4e4e4"/><rect x="61.9" y="697.10" width="1.4" height="4.9" fill="#e4e4e4"/><use href="#i-srch" x="107.8" y="690.85" width="21.1" height="17"/><use href="#i-bud" x="521.9" y="689.20" width="20" height="20"/><rect x="19.4" y="744.95" width="12.5" height="12.4" rx="1.2" fill="#fff" stroke="#757575" stroke-width="2"/><circle cx="61.3" cy="750.85" r="6.25" fill="#797979"/><rect x="59.2" y="748.40" width="1.4" height="4.9" fill="#e4e4e4"/><rect x="61.9" y="748.40" width="1.4" height="4.9" fill="#e4e4e4"/><use href="#i-srch" x="107.8" y="742.15" width="21.1" height="17"/><use href="#i-bud" x="521.9" y="740.50" width="20" height="20"/><rect x="19.4" y="800.80" width="12.5" height="12.4" rx="1.2" fill="#fff" stroke="#757575" stroke-width="2"/><circle cx="61.3" cy="806.70" r="6.25" fill="#797979"/><rect x="59.2" y="804.25" width="1.4" height="4.9" fill="#e4e4e4"/><rect x="61.9" y="804.25" width="1.4" height="4.9" fill="#e4e4e4"/><use href="#i-srch" x="107.8" y="798.00" width="21.1" height="17"/><use href="#i-bud" x="521.9" y="796.35" width="20" height="20"/></svg>
<div class="abs" style="left:0;top:837px;width:1990px;height:12px;background:#fff"></div><div class="abs" style="left:485px;top:838px;width:1243px;height:10px;background:#bdc1c6"></div>
<div class="abs" style="left:1990px;top:0;width:9px;height:849px;background:#f1f3f4"></div><div class="abs" style="left:1990px;top:0;width:9px;height:497px;background:#b1b2b4"></div>
</div>
</body></html>
